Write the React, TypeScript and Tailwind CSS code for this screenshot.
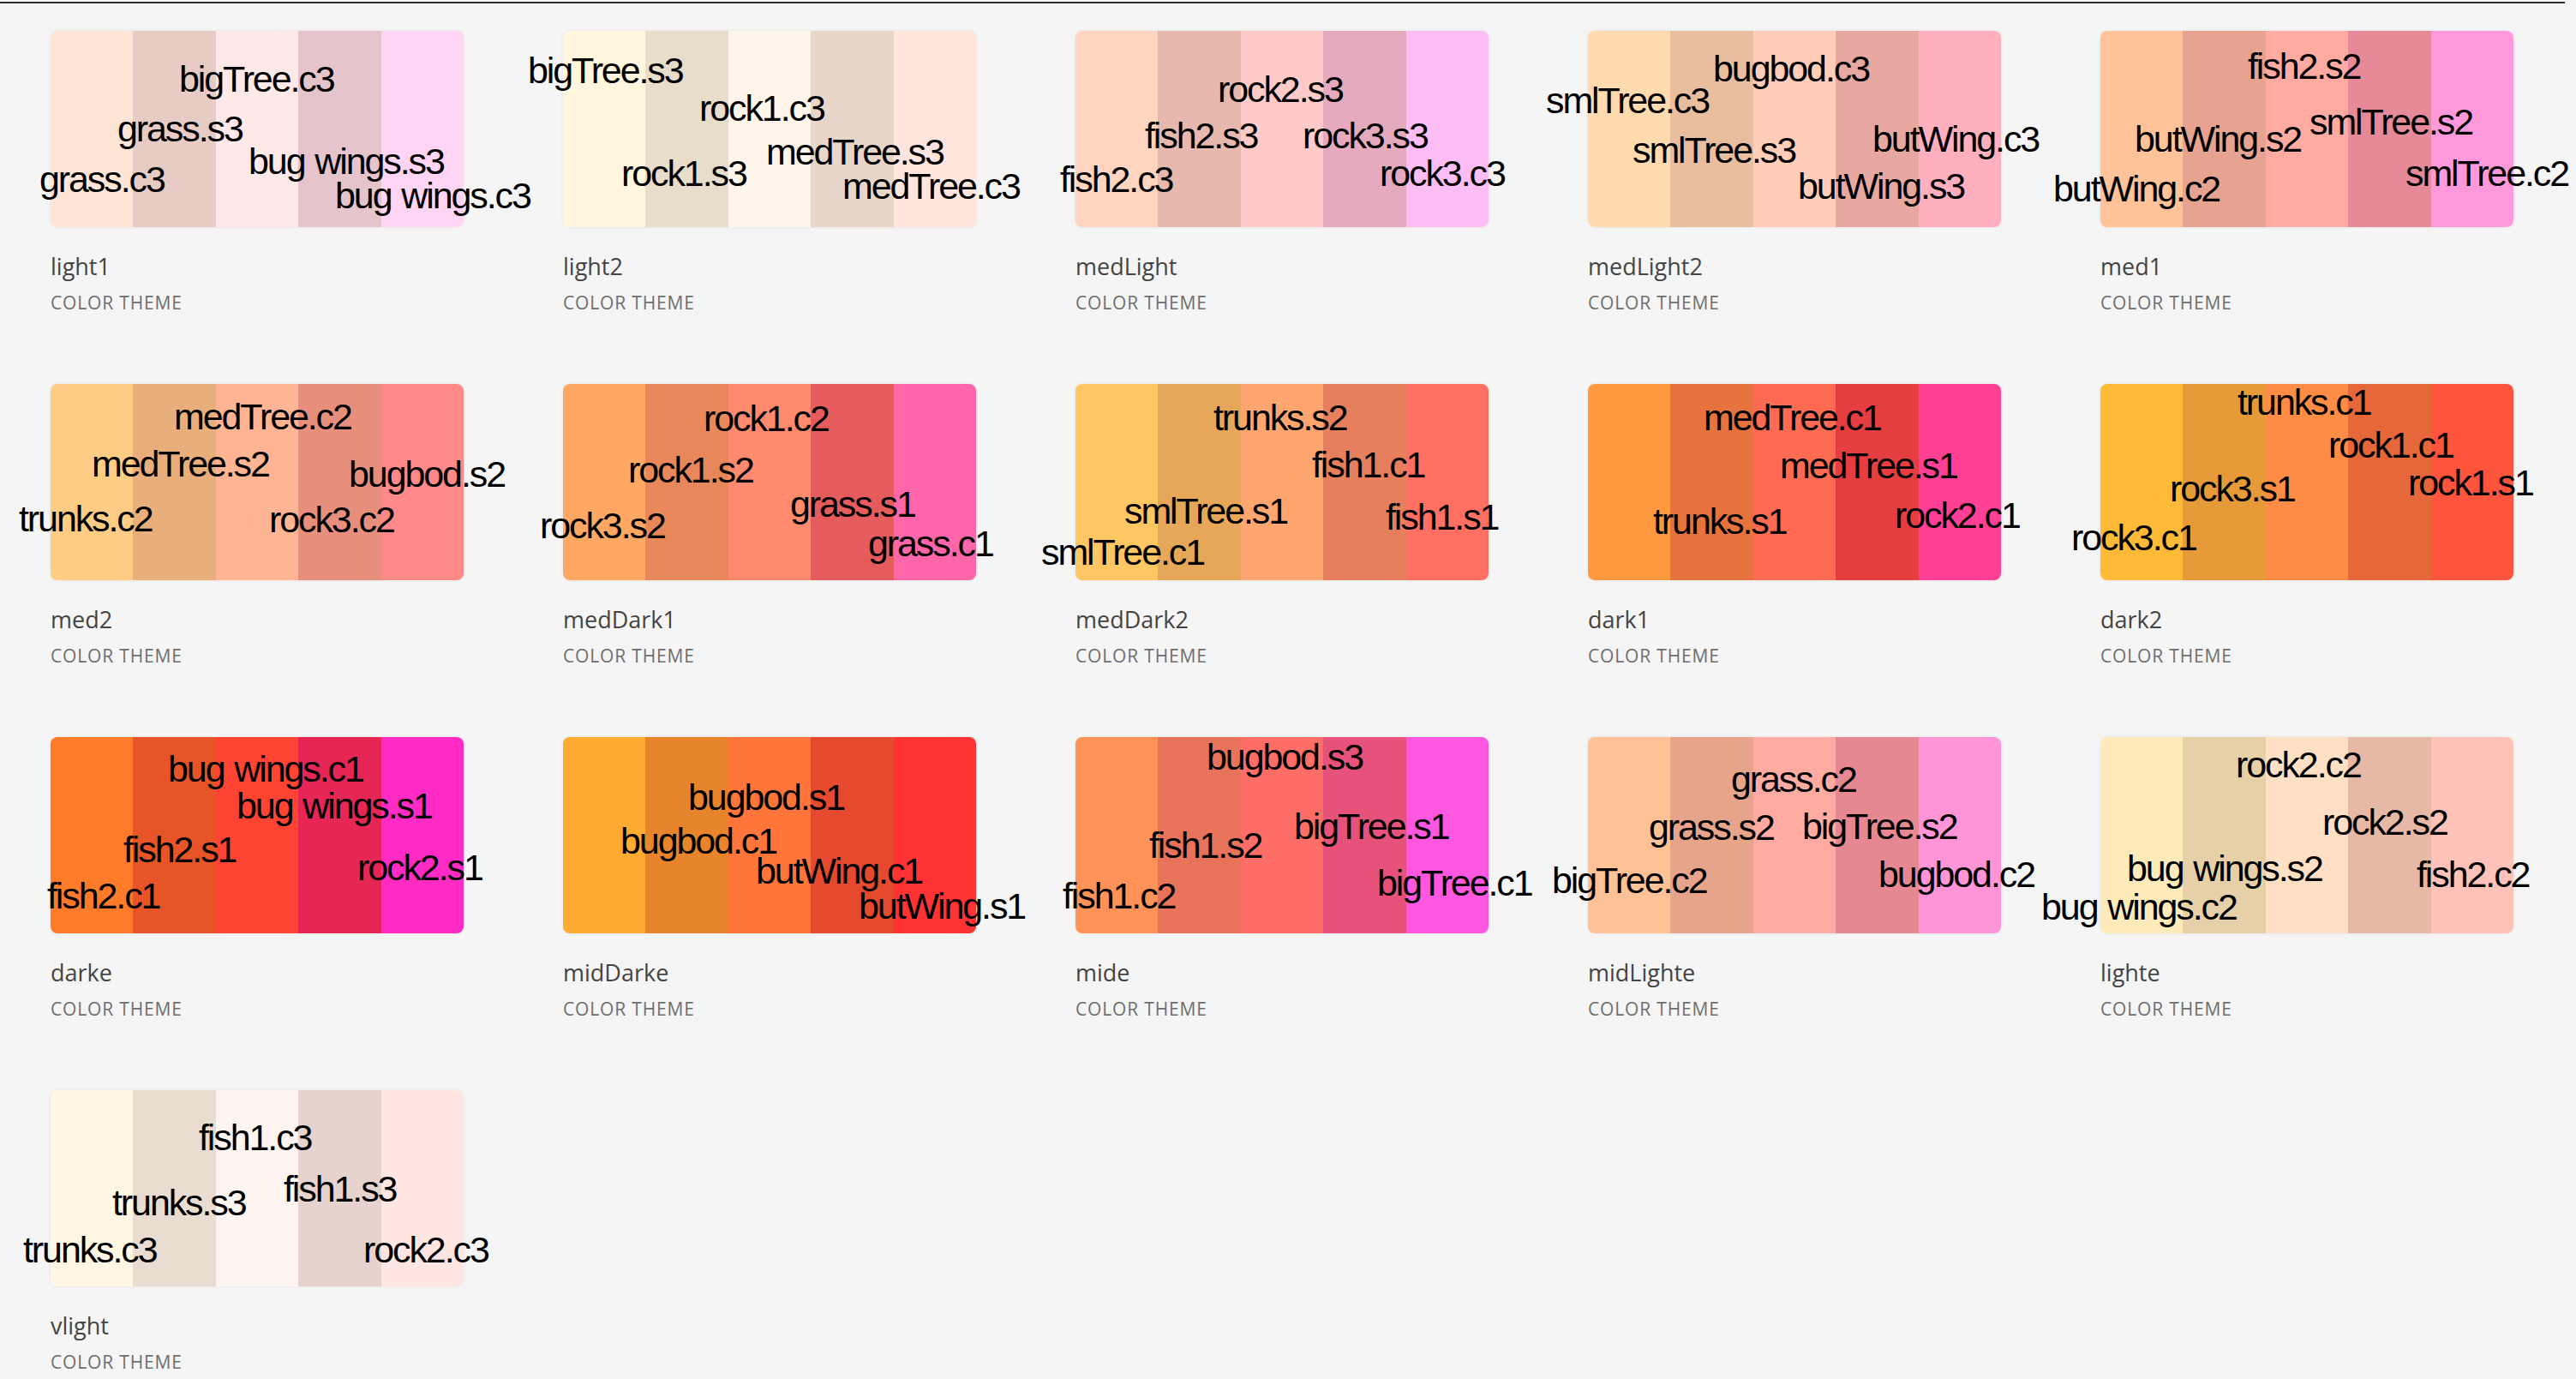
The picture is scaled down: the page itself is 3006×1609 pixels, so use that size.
type Label = [string, number, number];

type Theme = {
  name: string;
  colors: string[];
  labels: Label[];
};

// label = [text, left, baseline] measured from the swatch's top-left corner
const themes: Theme[] = [
  {
    name: "light1",
    colors: ["#FFE5D5", "#E6CCC4", "#FFE8E8", "#E6C4CB", "#FFD5F3"],
    labels: [
      ["bigTree.c3", 150, 71],
      ["grass.s3", 78, 129],
      ["bug wings.s3", 231, 167],
      ["grass.c3", -13, 188],
      ["bug wings.c3", 332, 207],
    ],
  },
  {
    name: "light2",
    colors: ["#FFF6DD", "#E8DCCB", "#FFF5EB", "#E8D6CB", "#FFE5DE"],
    labels: [
      ["bigTree.s3", -41, 61],
      ["rock1.c3", 159, 105],
      ["medTree.s3", 237, 156],
      ["rock1.s3", 68, 181],
      ["medTree.c3", 326, 196],
    ],
  },
  {
    name: "medLight",
    colors: ["#FFD5BF", "#E6B8AE", "#FFCBC8", "#E5AABD", "#FFBDF6"],
    labels: [
      ["rock2.s3", 166, 83],
      ["fish2.s3", 81, 137],
      ["rock3.s3", 265, 137],
      ["fish2.c3", -18, 188],
      ["rock3.c3", 355, 181],
    ],
  },
  {
    name: "medLight2",
    colors: ["#FFDAAF", "#E8BE9F", "#FFCDB8", "#E6A8A0", "#FFAFBE"],
    labels: [
      ["bugbod.c3", 146, 59],
      ["smlTree.c3", -49, 96],
      ["smlTree.s3", 52, 154],
      ["butWing.c3", 332, 141],
      ["butWing.s3", 245, 196],
    ],
  },
  {
    name: "med1",
    colors: ["#FFC299", "#E6A38F", "#FFABA1", "#E68A99", "#FF99DB"],
    labels: [
      ["fish2.s2", 172, 56],
      ["butWing.s2", 40, 141],
      ["smlTree.s2", 244, 121],
      ["butWing.c2", -55, 199],
      ["smlTree.c2", 356, 181],
    ],
  },
  {
    name: "med2",
    colors: ["#FFCC85", "#E8AE7B", "#FFB594", "#E88E7D", "#FF8888"],
    labels: [
      ["medTree.c2", 144, 53],
      ["medTree.s2", 48, 108],
      ["bugbod.s2", 348, 120],
      ["trunks.c2", -37, 172],
      ["rock3.c2", 255, 173],
    ],
  },
  {
    name: "medDark1",
    colors: ["#FFA863", "#E8875A", "#FF8A6E", "#E65C5C", "#FF66AA"],
    labels: [
      ["rock1.c2", 164, 55],
      ["rock1.s2", 76, 115],
      ["grass.s1", 265, 155],
      ["rock3.s2", -27, 180],
      ["grass.c1", 356, 201],
    ],
  },
  {
    name: "medDark2",
    colors: ["#FFC664", "#E6A858", "#FFA570", "#E67F5E", "#FF7062"],
    labels: [
      ["trunks.s2", 161, 54],
      ["fish1.c1", 276, 109],
      ["smlTree.s1", 57, 163],
      ["fish1.s1", 362, 170],
      ["smlTree.c1", -40, 211],
    ],
  },
  {
    name: "dark1",
    colors: ["#FF9940", "#E6733D", "#FF6B52", "#E63E40", "#FF4095"],
    labels: [
      ["medTree.c1", 135, 54],
      ["medTree.s1", 224, 110],
      ["trunks.s1", 76, 175],
      ["rock2.c1", 358, 168],
    ],
  },
  {
    name: "dark2",
    colors: ["#FFBA38", "#E69B38", "#FF8C45", "#E6673A", "#FF553D"],
    labels: [
      ["trunks.c1", 160, 36],
      ["rock1.c1", 266, 86],
      ["rock3.s1", 81, 137],
      ["rock1.s1", 359, 130],
      ["rock3.c1", -34, 194],
    ],
  },
  {
    name: "darke",
    colors: ["#FF7A29", "#E65427", "#FF4433", "#E62655", "#FF2BC4"],
    labels: [
      ["bug wings.c1", 137, 52],
      ["bug wings.s1", 217, 95],
      ["fish2.s1", 85, 146],
      ["rock2.s1", 358, 167],
      ["fish2.c1", -4, 200],
    ],
  },
  {
    name: "midDarke",
    colors: ["#FFAA30", "#E8842C", "#FF753A", "#E64A2E", "#FF3333"],
    labels: [
      ["bugbod.s1", 146, 85],
      ["bugbod.c1", 67, 136],
      ["butWing.c1", 225, 171],
      ["butWing.s1", 345, 212],
    ],
  },
  {
    name: "mide",
    colors: ["#FF9257", "#E6735A", "#FF6E66", "#E6527A", "#FF57E0"],
    labels: [
      ["bugbod.s3", 153, 38],
      ["fish1.s2", 86, 141],
      ["bigTree.s1", 255, 119],
      ["fish1.c2", -15, 200],
      ["bigTree.c1", 352, 185],
    ],
  },
  {
    name: "midLighte",
    colors: ["#FFC196", "#E6A48A", "#FFABA1", "#E68892", "#FF94D6"],
    labels: [
      ["grass.c2", 167, 64],
      ["grass.s2", 71, 120],
      ["bigTree.s2", 250, 119],
      ["bigTree.c2", -42, 182],
      ["bugbod.c2", 339, 175],
    ],
  },
  {
    name: "lighte",
    colors: ["#FFEAB9", "#E6D0A8", "#FFE0C4", "#E6B8A6", "#FFC2B8"],
    labels: [
      ["rock2.c2", 158, 47],
      ["rock2.s2", 259, 114],
      ["bug wings.s2", 31, 168],
      ["fish2.c2", 369, 175],
      ["bug wings.c2", -69, 213],
    ],
  },
  {
    name: "vlight",
    colors: ["#FFF6E3", "#E8DDD0", "#FFF5F0", "#E6D3CE", "#FFE6E3"],
    labels: [
      ["fish1.c3", 173, 70],
      ["fish1.s3", 272, 130],
      ["trunks.s3", 72, 146],
      ["trunks.c3", -32, 201],
      ["rock2.c3", 365, 201],
    ],
  },
];

function ThemeCard({ theme }: { theme: Theme }) {
  return (
    <div className="flex flex-col">
      <div className="relative h-[229px] w-[482px]">
        <div className="flex h-full w-full overflow-hidden rounded-[8px] shadow-[0_0_0_2px_rgba(0,0,0,0.025)]">
          {theme.colors.map((c, i) => (
            <div key={i} className="h-full flex-1" style={{ backgroundColor: c }} />
          ))}
        </div>
        {theme.labels.map(([text, x, y]) => (
          <span
            key={text}
            className="absolute whitespace-nowrap font-['Liberation_Sans',Arial,sans-serif] text-[43px] leading-none tracking-[-2.1px] [word-spacing:2px] text-black"
            style={{ left: x, top: y - 36 }}
          >
            {text}
          </span>
        ))}
      </div>
      <p className="mt-[28px] text-[27px] leading-[36px] text-[#444444]">{theme.name}</p>
      <p className="mt-[10px] text-[21px] uppercase leading-[28px] tracking-[0.04em] text-[#6e6e6e]">
        Color Theme
      </p>
    </div>
  );
}

export default function App() {
  return (
    <div className="min-h-screen bg-[#f5f5f5] font-['Open_Sans','Noto_Sans',sans-serif]">
      <div className="pt-[2px]">
        <div className="mr-[13px] h-[2px] bg-[#2e2e2e]" />
      </div>
      <div className="grid grid-cols-[repeat(5,482px)] gap-x-[116px] gap-y-[81px] pl-[59px] pt-[32px] pb-[40px]">
        {themes.map((t) => (
          <ThemeCard key={t.name} theme={t} />
        ))}
      </div>
    </div>
  );
}
